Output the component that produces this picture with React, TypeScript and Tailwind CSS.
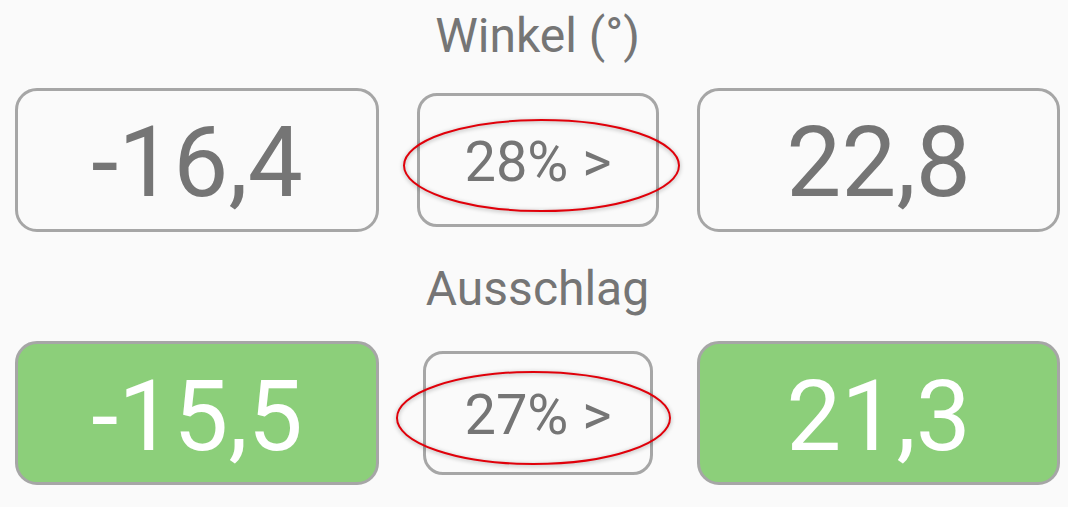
import React from "react";

type Stat = {
  min: string;
  max: string;
  pct: string;
  highlight?: boolean;
  mid: { w: string; h: string };
  ring: string;
};

function ValueBox({ value, highlight }: { value: string; highlight?: boolean }) {
  return (
    <div
      className={
        highlight
          ? "flex h-[144px] items-center justify-center rounded-[22px] border-[3px] border-[#a6a6a6] bg-[#8ccf7a] pt-[8px] text-[98px] leading-none text-white"
          : "flex h-[144px] items-center justify-center rounded-[22px] border-[3px] border-[#a6a6a6] bg-[#fafafa] pt-[6px] text-[98px] leading-none text-[#757575]"
      }
    >
      {value}
    </div>
  );
}

// red hand-drawn style marker around the percent button
function Ring({ className }: { className: string }) {
  return (
    <svg
      className={`pointer-events-none absolute drop-shadow-[0_1px_2px_rgba(0,0,0,0.35)] ${className}`}
      viewBox="0 0 280 96"
      preserveAspectRatio="none"
    >
      <ellipse cx="140" cy="48" rx="138" ry="46" fill="none" stroke="#e0000a" strokeWidth="2" />
    </svg>
  );
}

function StatRow({ stat, className = "" }: { stat: Stat; className?: string }) {
  return (
    <div className={`flex items-center pl-[15px] pr-[8px] ${className}`}>
      <div className="w-[364px]">
        <ValueBox value={stat.min} highlight={stat.highlight} />
      </div>
      <div className="flex flex-1 justify-center">
        <div
          className={`relative flex items-center justify-center rounded-[20px] border-[3px] border-[#a6a6a6] pt-[4px] text-[56px] leading-none ${stat.mid.w} ${stat.mid.h}`}
        >
          {stat.pct}
          <Ring className={stat.ring} />
        </div>
      </div>
      <div className="w-[363px]">
        <ValueBox value={stat.max} highlight={stat.highlight} />
      </div>
    </div>
  );
}

const winkel: Stat = {
  min: "-16,4",
  max: "22,8",
  pct: "28% >",
  mid: { w: "w-[242px]", h: "h-[134px]" },
  ring: "left-[-18px] top-[22px] h-[95px] w-[279px]",
};

const ausschlag: Stat = {
  min: "-15,5",
  max: "21,3",
  pct: "27% >",
  highlight: true,
  mid: { w: "w-[230px]", h: "h-[124px]" },
  ring: "left-[-31px] top-[16px] h-[96px] w-[277px]",
};

export default function App() {
  return (
    <div className="min-h-screen bg-[#fafafa] pt-[12px] font-['Roboto',sans-serif] text-[#757575]">
      <h2 className="pl-[15px] pr-[8px] text-center text-[48px] leading-none">Winkel (°)</h2>
      <StatRow stat={winkel} className="mt-[28px]" />
      <h2 className="mt-[33px] pl-[15px] pr-[8px] text-center text-[48px] leading-none">Ausschlag</h2>
      <StatRow stat={ausschlag} className="mt-[28px]" />
    </div>
  );
}
